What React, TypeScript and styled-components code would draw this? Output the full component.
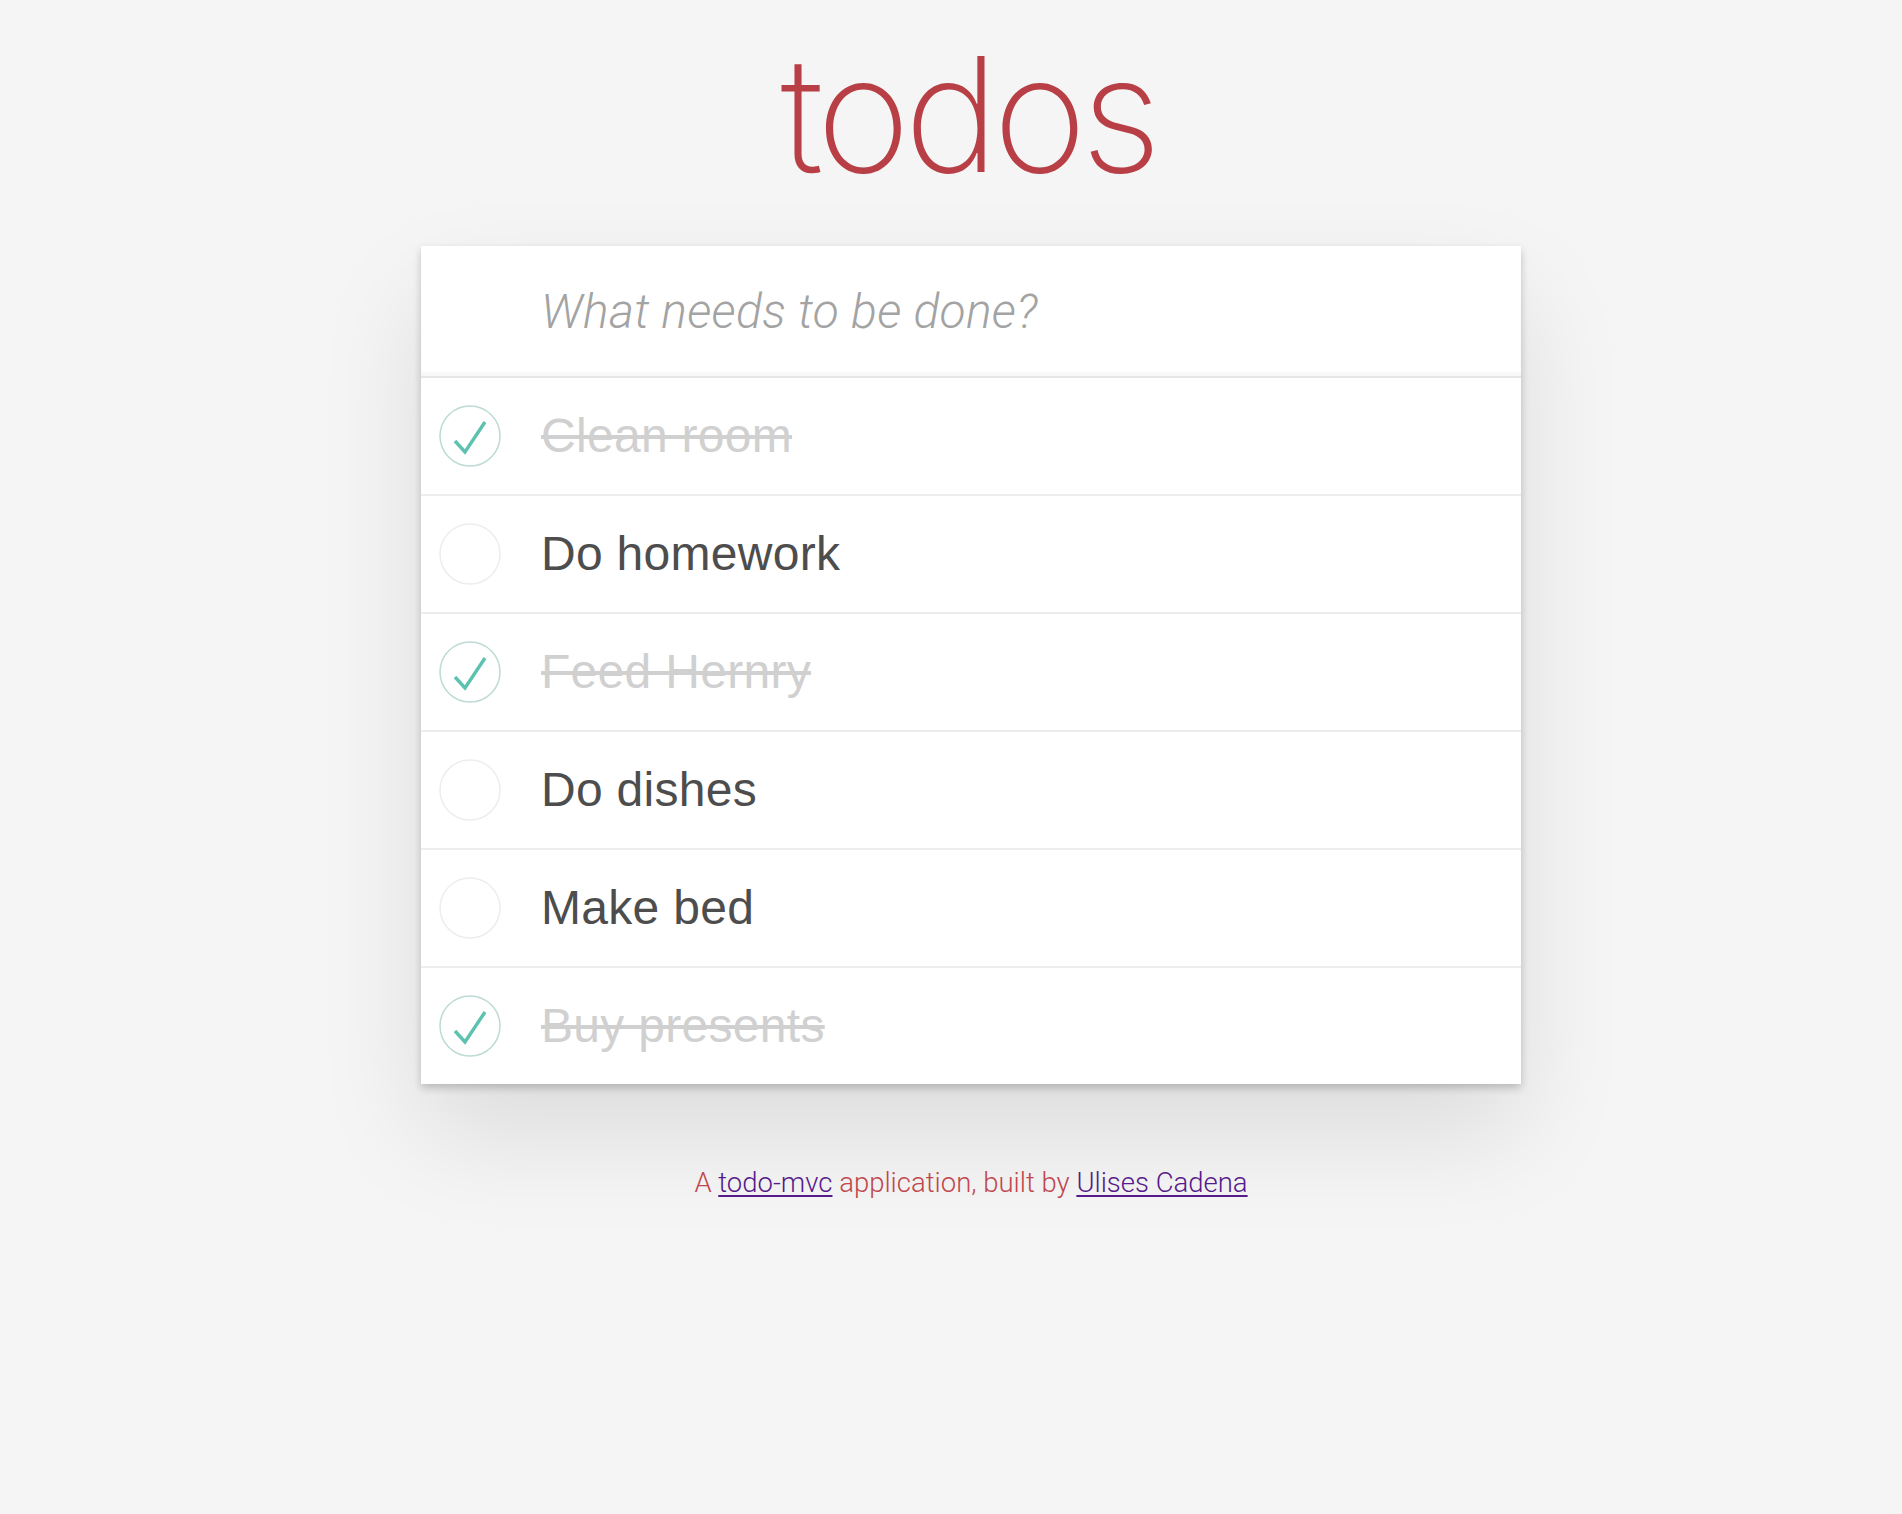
import styled, { createGlobalStyle } from 'styled-components';

const todos = [
  { id: 1, title: 'Clean room', completed: true },
  { id: 2, title: 'Do homework', completed: false },
  { id: 3, title: 'Feed Hernry', completed: true },
  { id: 4, title: 'Do dishes', completed: false },
  { id: 5, title: 'Make bed', completed: false },
  { id: 6, title: 'Buy presents', completed: true },
];

function Toggle({ checked }: { checked: boolean }) {
  return (
    <ToggleIcon viewBox='0 0 62 62' aria-hidden>
      <circle cx='31' cy='31' r='30' fill='none' stroke={checked ? '#bddad5' : '#ededed'} strokeWidth='1.5' />
      {checked && (
        <polyline points='16,36 26,47 46,17' fill='none' stroke='#5dc2af' strokeWidth='3.4' />
      )}
    </ToggleIcon>
  );
}

function App() {
  return (
    <>
      <GlobalStyle />
      <Page>
        <Title>todos</Title>
        <TodoApp>
          <NewTodo placeholder='What needs to be done?' />
          <TodoList>
            {todos.map((todo) => (
              <TodoItem key={todo.id}>
                <Toggle checked={todo.completed} />
                <Label $done={todo.completed}>{todo.title}</Label>
              </TodoItem>
            ))}
          </TodoList>
        </TodoApp>
        <Info>
          A <a href='#todo-mvc'>todo-mvc</a> application, built by <a href='#ulises'>Ulises Cadena</a>
        </Info>
      </Page>
    </>
  );
}

export default App;

const GlobalStyle = createGlobalStyle`
  html, body {
    margin: 0;
    background: #f5f5f5;
  }
  body {
    font-family: 'Liberation Sans', Arial, sans-serif;
    -webkit-font-smoothing: antialiased;
  }
`;
const Page = styled.div`
  min-height: 1514px;
  padding-left: 40px;
  display: flex;
  flex-direction: column;
  align-items: center;
  box-sizing: border-box;
`;
const Title = styled.h1`
  margin: 22px 0 0 0;
  height: 224px;
  font-family: Inter, 'Noto Sans', sans-serif;
  font-size: 160px;
  font-weight: 200;
  line-height: 184px;
  letter-spacing: -6px;
  text-indent: -6px;
  color: #b83f45;
  text-align: center;
`;
const TodoApp = styled.section`
  width: 1100px;
  background: #ffffff;
  box-shadow: 0 4px 8px rgba(0, 0, 0, 0.2), 0 50px 100px rgba(0, 0, 0, 0.1);
`;
const NewTodo = styled.input`
  display: block;
  width: 100%;
  height: 130px;
  box-sizing: border-box;
  margin: 0;
  padding: 0 32px 0 120px;
  border: none;
  outline: none;
  background: #ffffff;
  box-shadow: inset 0 -4px 2px rgba(0, 0, 0, 0.03);
  font-family: Roboto, 'Liberation Sans', sans-serif;
  font-size: 48px;
  font-weight: 300;
  letter-spacing: 0.3px;
  color: #4d4d4d;
  &::placeholder {
    font-style: italic;
    font-weight: 300;
    color: #a3a3a3;
  }
`;
const TodoList = styled.ul`
  margin: 0;
  padding: 0;
  list-style: none;
  border-top: 2px solid #e6e6e6;
`;
const TodoItem = styled.li`
  display: flex;
  align-items: center;
  gap: 40px;
  height: 116px;
  padding-left: 18px;
  border-bottom: 2px solid #ededed;
  &:last-child {
    border-bottom: none;
  }
`;
const ToggleIcon = styled.svg`
  width: 62px;
  height: 62px;
  flex: none;
`;
const Label = styled.label<{ $done: boolean }>`
  font-family: 'Liberation Sans', Arial, sans-serif;
  font-size: 48px;
  line-height: 1.2;
  letter-spacing: 0.3px;
  color: ${({ $done }) => ($done ? '#d0d0d0' : '#4d4d4d')};
  text-decoration: ${({ $done }) => ($done ? 'line-through' : 'none')};
`;
const Info = styled.footer`
  margin-top: 82px;
  font-family: Roboto, 'Liberation Sans', sans-serif;
  font-size: 27.5px;
  font-weight: 300;
  line-height: 34px;
  color: #c0474d;
  a {
    color: #551a8b;
    text-decoration: underline;
    text-decoration-thickness: 2px;
    text-underline-offset: 3px;
  }
`;
